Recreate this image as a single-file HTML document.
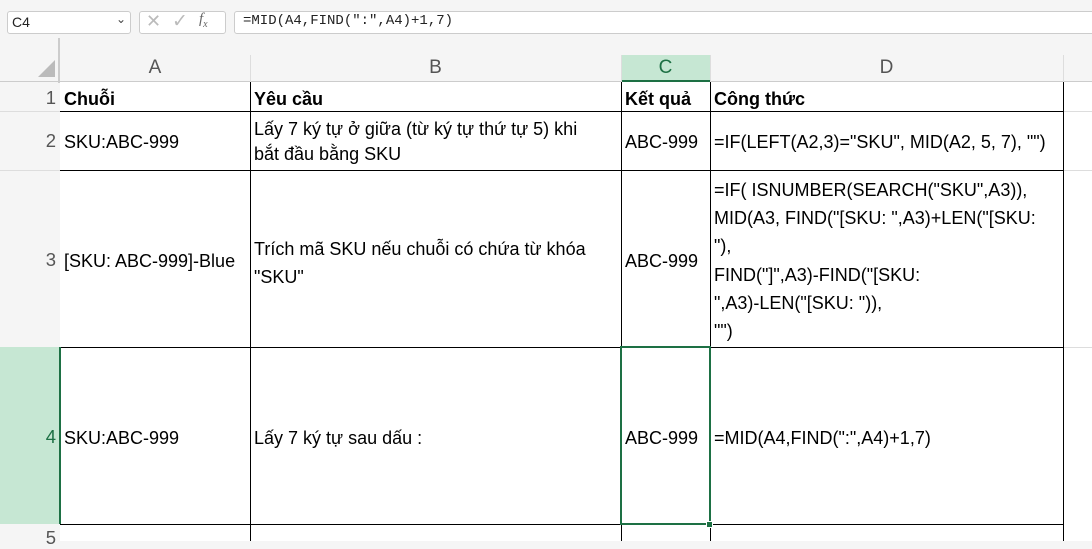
<!DOCTYPE html>
<html><head><meta charset="utf-8"><style>
*{margin:0;padding:0;box-sizing:border-box}
body{width:1092px;height:541px;overflow:hidden;background:#f5f5f5;font-family:"Liberation Sans",sans-serif;position:relative}
.a{position:absolute}
.t{position:absolute;font-size:18px;color:#000;line-height:22px;white-space:nowrap}
.b{font-weight:bold}
.hl{position:absolute;background:#000}
.rh{position:absolute;left:0;width:56px;text-align:right;font-size:18.5px;color:#555}
.ch{position:absolute;top:57px;font-size:19px;color:#555;text-align:center}
</style></head><body>
<div class="a" style="left:7px;top:11px;width:124px;height:23px;background:#fff;border:1px solid #ccc;border-radius:3px"></div>
<div class="a" style="left:12px;top:14px;font-size:14px;color:#222">C4</div>
<div class="a" style="left:116px;top:12px;font-size:12px;color:#444">&#8964;</div>
<div class="a" style="left:139px;top:11px;width:87px;height:23px;background:#fff;border:1px solid #ccc;border-radius:3px"></div>
<div class="a" style="left:146px;top:11px;font-size:18px;color:#bbb">&#10005;</div>
<div class="a" style="left:172px;top:10px;font-size:19px;color:#bbb">&#10003;</div>
<div class="a" style="left:199px;top:11px;font-size:15px;color:#666;font-style:italic;font-family:'Liberation Serif',serif">f<sub style="font-size:10px">x</sub></div>
<div class="a" style="left:234px;top:11px;width:870px;height:23px;background:#fff;border:1px solid #ccc;border-radius:3px"></div>
<div class="a" style="left:243px;top:13px;font-size:14px;font-family:'Liberation Mono',monospace;color:#222">=MID(A4,FIND(":",A4)+1,7)</div>
<div class="a" style="left:58px;top:38px;width:2px;height:45px;background:#ccc"></div>
<svg class="a" style="left:38px;top:60px" width="18" height="18"><polygon points="17,0 17,17 0,17" fill="#bbb"/></svg>
<div class="a" style="left:0;top:81px;width:1092px;height:1px;background:#ccc"></div>
<div class="a" style="left:621px;top:55px;width:89px;height:27px;background:#c6e7d3;border-bottom:2px solid #1d7044"></div>
<div class="ch" style="left:60px;width:190px">A</div>
<div class="ch" style="left:250px;width:371px">B</div>
<div class="ch" style="left:621px;width:89px;color:#1d7044">C</div>
<div class="ch" style="left:710px;width:353px">D</div>
<div class="a" style="left:250px;top:55px;width:1px;height:27px;background:#ddd"></div>
<div class="a" style="left:621px;top:55px;width:1px;height:27px;background:#ddd"></div>
<div class="a" style="left:710px;top:55px;width:1px;height:27px;background:#ddd"></div>
<div class="a" style="left:1063px;top:55px;width:1px;height:27px;background:#ddd"></div>
<div class="a" style="left:60px;top:82px;width:1032px;height:459px;background:#fff"></div>
<div class="a" style="left:1064px;top:111px;width:28px;height:1px;background:#ddd"></div>
<div class="a" style="left:1064px;top:170px;width:28px;height:1px;background:#ddd"></div>
<div class="a" style="left:1064px;top:347px;width:28px;height:1px;background:#ddd"></div>
<div class="a" style="left:0;top:347px;width:60px;height:177px;background:#c6e7d3"></div>
<div class="a" style="left:0;top:111px;width:60px;height:1px;background:#ddd"></div>
<div class="a" style="left:0;top:170px;width:60px;height:1px;background:#ddd"></div>
<div class="rh" style="top:87px">1</div>
<div class="rh" style="top:130px">2</div>
<div class="rh" style="top:249px">3</div>
<div class="rh" style="top:426px;color:#1d7044">4</div>
<div class="rh" style="top:527px">5</div>
<div class="hl" style="left:60px;top:111px;width:1004px;height:1px"></div>
<div class="hl" style="left:60px;top:170px;width:1004px;height:1px"></div>
<div class="hl" style="left:60px;top:347px;width:1004px;height:1px"></div>
<div class="hl" style="left:60px;top:524px;width:1004px;height:1px"></div>
<div class="hl" style="left:250px;top:82px;width:1px;height:459px"></div>
<div class="hl" style="left:621px;top:82px;width:1px;height:459px"></div>
<div class="hl" style="left:710px;top:82px;width:1px;height:459px"></div>
<div class="hl" style="left:1063px;top:82px;width:1px;height:459px"></div>
<div class="a" style="left:59px;top:347px;width:2px;height:177px;background:#1d7044"></div>
<div class="a" style="left:620px;top:346px;width:91px;height:179px;border:2px solid #1d7044"></div>
<div class="a" style="left:706px;top:521px;width:7px;height:7px;background:#1d7044;border:1px solid #fff"></div>
<div class="t b" style="left:64px;top:88px">Chuỗi</div>
<div class="t b" style="left:254px;top:88px">Yêu cầu</div>
<div class="t b" style="left:625px;top:88px">Kết quả</div>
<div class="t b" style="left:714px;top:88px">Công thức</div>
<div class="t" style="left:64px;top:131px">SKU:ABC-999</div>
<div class="t" style="left:254px;top:117px;line-height:25px">Lấy 7 ký tự ở giữa (từ ký tự thứ tự 5) khi<br>bắt đầu bằng SKU</div>
<div class="t" style="left:625px;top:131px">ABC-999</div>
<div class="t" style="left:714px;top:131px">=IF(LEFT(A2,3)="SKU", MID(A2, 5, 7), "")</div>
<div class="t" style="left:64px;top:250px">[SKU: ABC-999]-Blue</div>
<div class="t" style="left:254px;top:235px;line-height:28px">Trích mã SKU nếu chuỗi có chứa từ khóa<br>"SKU"</div>
<div class="t" style="left:625px;top:250px">ABC-999</div>
<div class="t" style="left:714px;top:176px;line-height:28.2px">=IF( ISNUMBER(SEARCH("SKU",A3)),<br>MID(A3, FIND("[SKU: ",A3)+LEN("[SKU:<br>"),<br>FIND("]",A3)-FIND("[SKU:<br>",A3)-LEN("[SKU: ")),<br>"")</div>
<div class="t" style="left:64px;top:427px">SKU:ABC-999</div>
<div class="t" style="left:254px;top:427px">Lấy 7 ký tự sau dấu :</div>
<div class="t" style="left:625px;top:427px">ABC-999</div>
<div class="t" style="left:714px;top:427px">=MID(A4,FIND(":",A4)+1,7)</div>
</body></html>
